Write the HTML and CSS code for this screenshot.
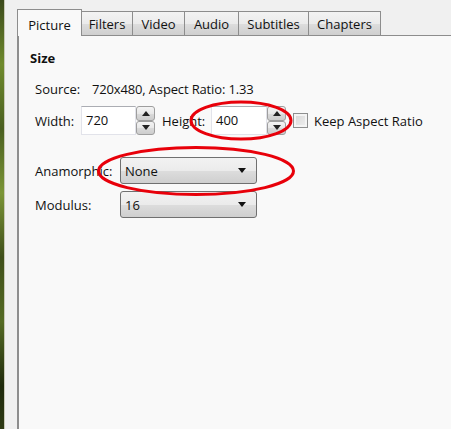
FILE: index.html
```html
<!DOCTYPE html>
<html>
<head>
<meta charset="utf-8">
<link rel="stylesheet" href="styles.css">
</head>
<body>
<div class="desk"></div>
<div class="window">
  <div class="tabs">
    <div class="tab active">Picture</div>
    <div class="tab t-filters">Filters</div>
    <div class="tab t-video">Video</div>
    <div class="tab t-audio">Audio</div>
    <div class="tab t-subs">Subtitles</div>
    <div class="tab t-chap">Chapters</div>
  </div>
  <div class="panel">
    <div class="heading">Size</div>
    <div class="source"><span class="src-label">Source:</span><span class="src-val">720x480, Aspect Ratio: 1.33</span></div>
    <div class="row dims">
      <span class="lbl-w">Width:</span>
      <div class="num"><div class="field">720</div><div class="spin"><div class="sb up"><i></i></div><div class="sb down"><i></i></div></div></div>
      <span class="lbl-h">Height:</span>
      <div class="num"><div class="field">400</div><div class="spin"><div class="sb up"><i></i></div><div class="sb down"><i></i></div></div></div>
      <div class="check"><div class="box"></div><span>Keep Aspect Ratio</span></div>
    </div>
    <div class="row combo-row first">
      <span class="lbl-c">Anamorphic:</span>
      <div class="combo"><span>None</span><i></i></div>
    </div>
    <div class="row combo-row">
      <span class="lbl-c">Modulus:</span>
      <div class="combo"><span>16</span><i></i></div>
    </div>
  </div>
</div>
<svg class="marks" width="451" height="429" viewBox="0 0 451 429">
  <ellipse cx="241" cy="120.5" rx="50" ry="18.5" fill="none" stroke="#e8000a" stroke-width="3"/>
  <ellipse cx="196" cy="171" rx="97.5" ry="23.5" fill="none" stroke="#e8000a" stroke-width="3"/>
</svg>
</body>
</html>
```
FILE: styles.css
```css
html, body {
  margin: 0;
  padding: 0;
  width: 451px;
  height: 429px;
  overflow: hidden;
}
body {
  display: flex;
  background: #f0f0f0;
  font-family: "Open Sans", "Noto Sans", sans-serif;
  font-size: 13px;
  color: #111;
  position: relative;
}
.desk {
  width: 4px;
  flex: none;
  background: linear-gradient(180deg, #3b4a1c 0%, #6f8a2c 15%, #4a5f20 30%, #7b9536 45%, #3f4f1a 60%, #556b24 75%, #1f2a0c 90%, #2e3a14 100%);
  border-right: 1px solid #c9c9b8;
}
.window {
  flex: 1;
  display: flex;
  flex-direction: column;
  padding: 9px 0 0 12px;
}
.tabs {
  display: flex;
  align-items: flex-end;
  height: 27px;
  position: relative;
  z-index: 1;
  margin-bottom: -1px;
}
.tab {
  height: 24px;
  box-sizing: border-box;
  border: 1px solid #8d8d8d;
  border-bottom: none;
  border-left: none;
  background: linear-gradient(180deg, #f3f3f3 0%, #ebebeb 50%, #dddddd 51%, #cfcfcf 100%);
  padding-top: 3px;
  text-align: center;
  line-height: 19px;
  margin-bottom: 1px;
}
.tab.active {
  width: 65px;
  height: 27px;
  border-left: 1px solid #8d8d8d;
  background: #f9f9f9;
  padding-top: 6px;
  margin-bottom: 0;
}
.t-filters { width: 51px; }
.t-video { width: 52px; }
.t-audio { width: 54px; }
.t-subs { width: 70px; }
.t-chap { width: 72px; }
.panel {
  flex: 1;
  background: #f9f9f9;
  border-top: 1px solid #8d8d8d;
  border-left: 2px solid #8d8d8d;
  padding: 13px 0 0 11px;
}
.heading {
  font-weight: bold;
  height: 20px;
  line-height: 18px;
}
.source {
  margin-top: 11px;
  padding-left: 5px;
  display: flex;
  line-height: 18px;
}
.src-label {
  width: 57px;
}
.src-val {
  letter-spacing: -0.15px;
}
.row {
  display: flex;
  align-items: center;
  padding-left: 5px;
}
.dims {
  margin-top: 8px;
  height: 29px;
}
.lbl-w {
  width: 46px;
}
.lbl-h {
  width: 49px;
  margin-left: 7px;
}
.num {
  display: flex;
  height: 29px;
}
.field {
  width: 55px;
  box-sizing: border-box;
  border: 1px solid #e2e3ea;
  border-top-color: #abadb3;
  background: #fff;
  padding: 4px 0 0 4px;
  line-height: 18px;
}
.lbl-h + .num .field {
  width: 56px;
}
.spin {
  width: 19px;
  display: flex;
  flex-direction: column;
}
.sb {
  flex: 1;
  box-sizing: border-box;
  border: 1px solid #9e9e9e;
  border-radius: 3px;
  background: linear-gradient(180deg, #f4f4f4 0%, #e8e8e8 50%, #dadada 51%, #cdcdcd 100%);
  display: flex;
  align-items: center;
  justify-content: center;
}
.sb i {
  width: 0;
  height: 0;
  border-left: 4px solid transparent;
  border-right: 4px solid transparent;
}
.up i { border-bottom: 5px solid #222; }
.down i { border-top: 5px solid #222; }
.check {
  display: flex;
  align-items: center;
  margin-left: 7px;
}
.box {
  width: 15px;
  height: 15px;
  box-sizing: border-box;
  border: 1px solid #8e8f8f;
  background: linear-gradient(135deg, #d6d6d6 0%, #f0f0f0 100%);
  box-shadow: inset 0 0 0 2px #f4f4f4;
  margin-right: 6px;
}
.combo-row {
  height: 27px;
}
.combo-row.first {
  margin-top: 22px;
}
.combo-row + .combo-row {
  margin-top: 7px;
}
.lbl-c {
  width: 85px;
}
.combo {
  width: 137px;
  height: 27px;
  box-sizing: border-box;
  border: 1px solid #707070;
  border-radius: 3px;
  background: linear-gradient(180deg, #f2f2f2 0%, #ebebeb 50%, #dddddd 51%, #cfcfcf 100%);
  display: flex;
  align-items: center;
  justify-content: space-between;
  padding: 0 10px 0 4px;
}
.combo i {
  width: 0;
  height: 0;
  border-left: 4px solid transparent;
  border-right: 4px solid transparent;
  border-top: 5px solid #111;
}
.marks {
  position: absolute;
  left: 0;
  top: 0;
  pointer-events: none;
}
```
